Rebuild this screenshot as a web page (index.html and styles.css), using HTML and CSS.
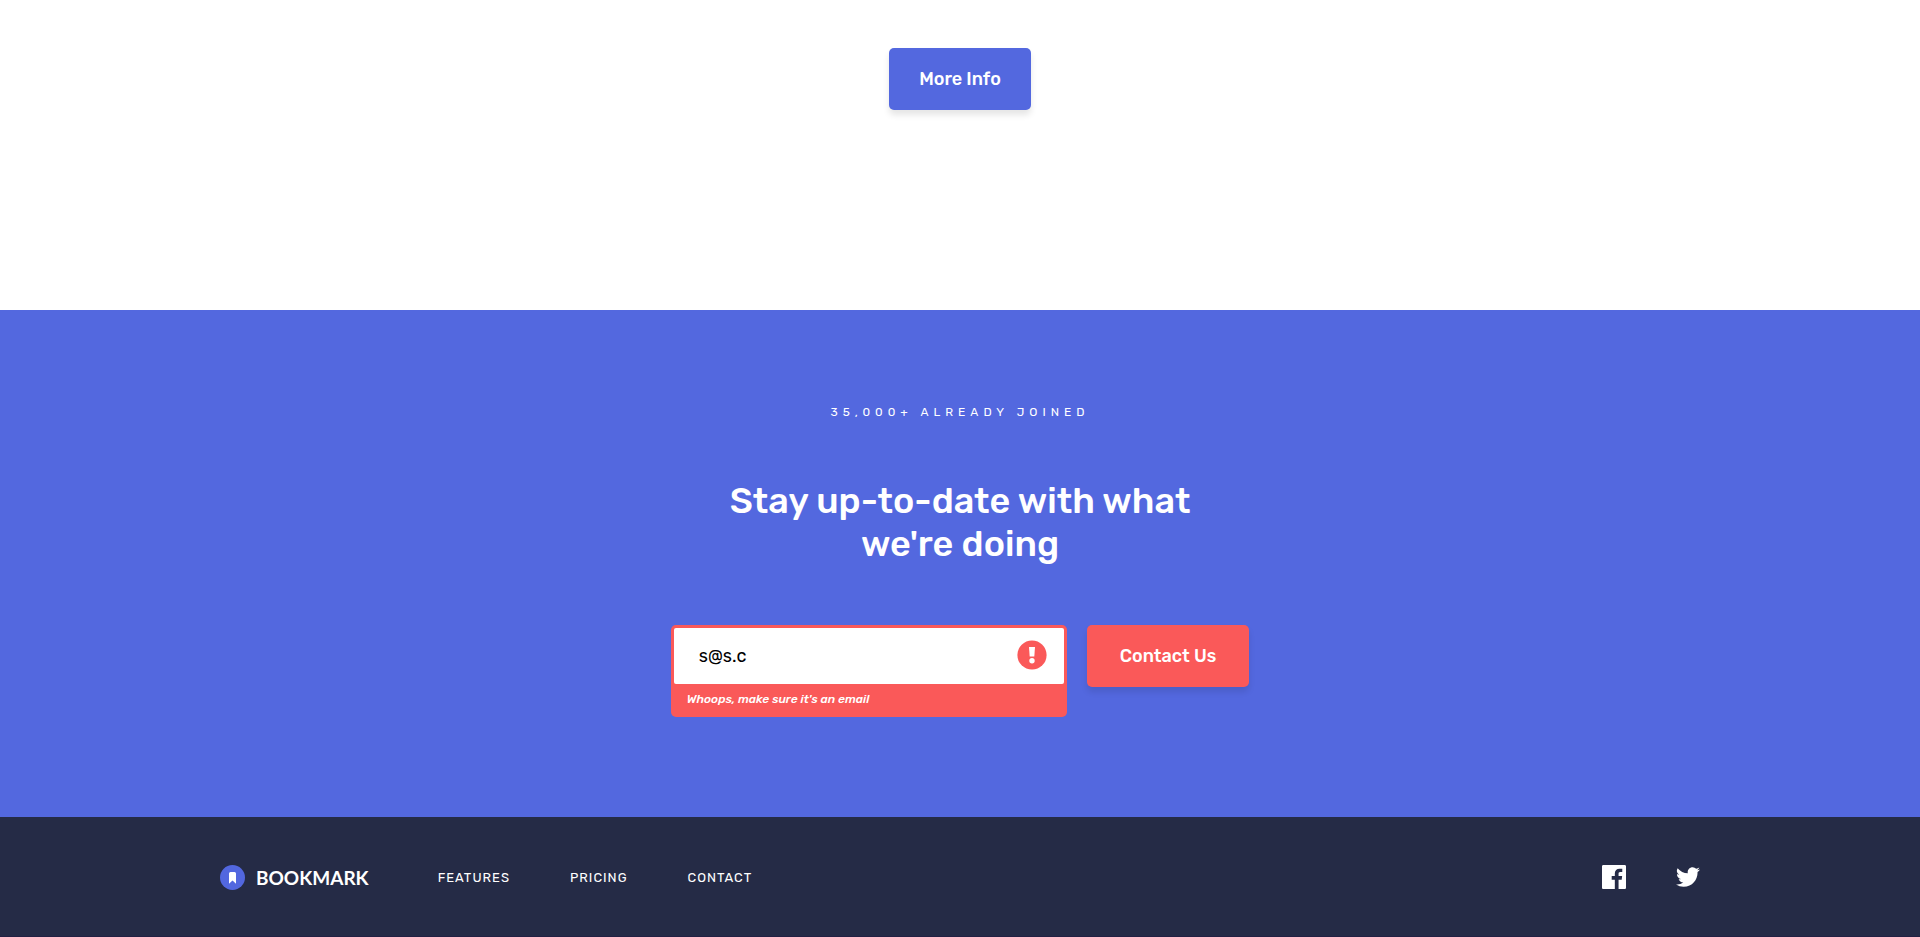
FILE: index.html
```
<!DOCTYPE html>
<html lang="en">
<head>
<meta charset="utf-8">
<meta name="viewport" content="width=device-width, initial-scale=1">
<title>Bookmark</title>
<link rel="stylesheet" href="styles.css">
</head>
<body>
<main>
  <section class="faq">
    <button class="btn btn-primary" type="button">More Info</button>
  </section>
  <section class="newsletter">
    <p class="joined">35,000+ already joined</p>
    <h2 class="title">Stay up-to-date with what we're doing</h2>
    <form class="form" novalidate>
      <div class="field">
        <input class="email" type="email" value="s@s.c" aria-label="Email address" aria-invalid="true" aria-describedby="email-error">
        <svg class="error-icon" viewBox="0 0 30 30" aria-hidden="true">
          <circle cx="15" cy="15" r="14.600" fill="#fa5959"/>
          <path d="M12 7h6l-.7 9.500h-4.600z" fill="#fff"/>
          <circle cx="15" cy="20.700" r="2.700" fill="#fff"/>
        </svg>
        <p class="error" id="email-error">Whoops, make sure it's an email</p>
      </div>
      <button class="btn btn-accent" type="submit">Contact Us</button>
    </form>
  </section>
</main>
<footer class="footer">
  <div class="footer-inner">
    <a class="logo" href="#">
      <svg class="logo-mark" viewBox="0 0 25 25" aria-hidden="true">
        <circle cx="12.500" cy="12.500" r="12.500" fill="#5267df"/>
        <path d="M10.500 7h4A1.500 1.500 0 0 1 16 8.500v10.200l-3.500-3.200L9 18.700V8.500A1.500 1.500 0 0 1 10.500 7z" fill="#fff"/>
      </svg>
      <span>BOOKMARK</span>
    </a>
    <nav class="nav">
      <a href="#">Features</a>
      <a href="#">Pricing</a>
      <a href="#">Contact</a>
    </nav>
    <div class="social">
      <a href="#" aria-label="Facebook"><svg width="24" height="24" viewBox="0 0 24 24"><path fill="#fff" d="M22.675 0H1.325C.593 0 0 .593 0 1.325v21.351C0 23.407.593 24 1.325 24H12.820v-9.294H9.692v-3.622h3.128V8.413c0-3.100 1.893-4.788 4.659-4.788 1.325 0 2.463.099 2.795.143v3.240l-1.918.001c-1.504 0-1.795.715-1.795 1.763v2.313h3.587l-.467 3.622h-3.120V24h6.116c.730 0 1.323-.593 1.323-1.325V1.325C24 .593 23.407 0 22.675 0z"/></svg></a>
      <a href="#" aria-label="Twitter"><svg width="24" height="20" viewBox="0 0 24 20"><path fill="#fff" d="M24 2.557a9.830 9.830 0 0 1-2.828.775A4.932 4.932 0 0 0 23.337.608a9.864 9.864 0 0 1-3.127 1.195A4.916 4.916 0 0 0 16.616.248c-3.179 0-5.515 2.966-4.797 6.045A13.978 13.978 0 0 1 1.671 1.149a4.930 4.930 0 0 0 1.523 6.574 4.903 4.903 0 0 1-2.229-.616c-.054 2.281 1.581 4.415 3.949 4.890a4.935 4.935 0 0 1-2.224.084 4.928 4.928 0 0 0 4.600 3.419A9.900 9.900 0 0 1 0 17.540a13.940 13.940 0 0 0 7.548 2.212c9.142 0 14.307-7.721 13.995-14.646A10.025 10.025 0 0 0 24 2.557z"/></svg></a>
    </div>
  </div>
</footer>
</body>
</html>
```
FILE: styles.css
```
* {
  box-sizing: border-box;
}

body {
  margin: 0;
  font-family: Rubik, Inter, Roboto, sans-serif;
  font-size: 18px;
  background: #fff;
}

a {
  color: inherit;
  text-decoration: none;
}

.btn {
  padding: 20px 30px;
  border: 0;
  border-radius: 5px;
  color: #fff;
  font: inherit;
  font-weight: 500;
  line-height: 22px;
  box-shadow: 0 5px 6px rgba(0, 0, 0, 0.1);
  cursor: pointer;
}

.btn-primary {
  background: #5368df;
}

.btn-accent {
  padding: 20px 33px;
  background: #fa5959;
}

.faq {
  display: flex;
  justify-content: center;
  padding: 48px 24px 200px;
}

.newsletter {
  display: flex;
  flex-direction: column;
  align-items: center;
  padding: 92px 24px 100px;
  background: #5368df;
  color: #fff;
}

.joined {
  margin: 0;
  font-size: 12px;
  font-weight: 400;
  line-height: 20px;
  letter-spacing: 5px;
  text-transform: uppercase;
}

.title {
  max-width: 500px;
  margin: 57px 0 60px;
  font-size: 36px;
  font-weight: 500;
  line-height: 43px;
  text-align: center;
}

.form {
  display: flex;
  align-items: flex-start;
  gap: 20px;
}

.field {
  position: relative;
  width: 396px;
  padding: 3px;
  border-radius: 5px;
  background: #fa5959;
}

.email {
  display: block;
  width: 100%;
  height: 56px;
  padding: 0 64px 0 25px;
  border: 0;
  border-radius: 2px;
  outline: 0;
  background: #fff;
  color: #000;
  font: inherit;
}

.error-icon {
  position: absolute;
  top: 15px;
  right: 20px;
  width: 30px;
  height: 30px;
}

.error {
  margin: 0;
  padding: 7px 13px;
  font-size: 12px;
  font-style: italic;
  font-weight: 500;
  line-height: 16px;
}

.footer {
  padding: 0 24px;
  background: #252b46;
  box-shadow: inset 0 -1px #232043;
  color: #fff;
}

.footer-inner {
  display: flex;
  align-items: center;
  max-width: 1480px;
  min-height: 120px;
  margin: 0 auto;
}

.logo {
  display: flex;
  align-items: center;
  gap: 11px;
  font-family: Lato, sans-serif;
  font-size: 19px;
  font-weight: 700;
}

.logo-mark {
  width: 25px;
  height: 25px;
}

.nav {
  display: flex;
  gap: 60px;
  margin-left: 69px;
  font-size: 13px;
  letter-spacing: 1px;
  text-transform: uppercase;
}

.social {
  display: flex;
  align-items: center;
  gap: 50px;
  margin-left: auto;
}

.social svg {
  display: block;
}
```
